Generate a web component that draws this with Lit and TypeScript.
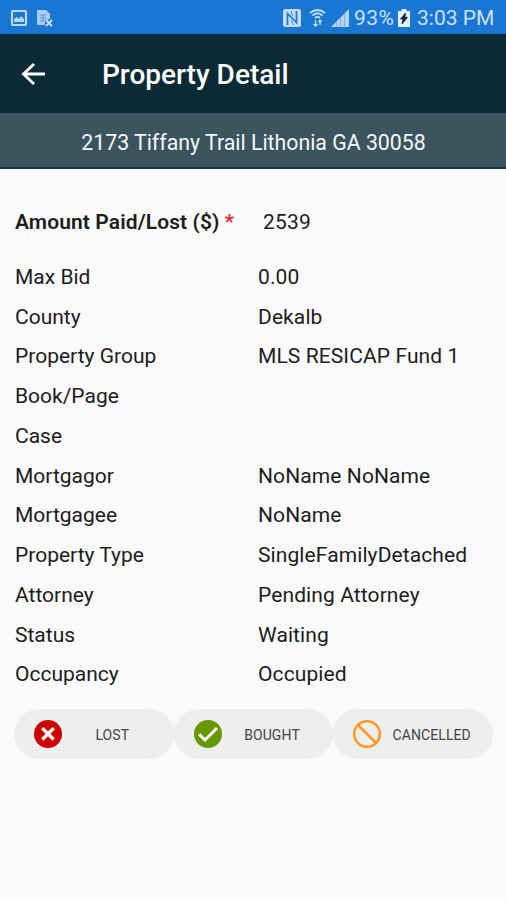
import { LitElement, html, css, svg } from "lit";
import { customElement } from "lit/decorators.js";

const rows: [string, string][] = [
  ["Max Bid", "0.00"],
  ["County", "Dekalb"],
  ["Property Group", "MLS RESICAP Fund 1"],
  ["Book/Page", ""],
  ["Case", ""],
  ["Mortgagor", "NoName NoName"],
  ["Mortgagee", "NoName"],
  ["Property Type", "SingleFamilyDetached"],
  ["Attorney", "Pending Attorney"],
  ["Status", "Waiting"],
  ["Occupancy", "Occupied"],
];

const lostIcon = svg`<circle cx="14" cy="14" r="14" fill="#cc0000"/><path d="M8.3 8.1L19.7 19.5M19.7 8.1L8.3 19.5" stroke="#fff" stroke-width="3.3"/>`;
const boughtIcon = svg`<circle cx="14" cy="14" r="14" fill="#669900"/><path d="M5.2 14.4L11 20L23 8" fill="none" stroke="#fff" stroke-width="3"/>`;
const cancelIcon = svg`<circle cx="14" cy="14" r="12.8" fill="none" stroke="#ff9822" stroke-width="2.5"/><path d="M5 5L23 23" stroke="#ff9822" stroke-width="2.5"/>`;

@customElement("app-root")
export class AppRoot extends LitElement {
  static styles = css`
    :host { display: block; height: 900px; background: #fafafa; font-family: Roboto, sans-serif; color: #1c1c1c; overflow: hidden; }
    svg { display: block; flex: none; }
    .status { height: 34px; background: #1976d2; display: flex; align-items: center; color: #c9e0fb; padding: 2px 11px 0 10px; box-sizing: border-box; }
    .status .pic { margin-right: 8px; }
    .status .right { margin-left: auto; display: flex; align-items: center; }
    .pct { font-size: 21px; margin-left: 5px; width: 44px; letter-spacing: 0.4px; }
    .time { font-size: 21px; width: 78px; margin-left: 7px; white-space: nowrap; letter-spacing: 0; }
    .wifi { margin-left: 8px; }
    .signal { margin-left: 5px; }
    .bar { height: 79px; background: #0a2a36; display: flex; align-items: center; padding-left: 21px; }
    .title { margin-left: 57px; padding-top: 2px; font-size: 28px; font-weight: 500; color: #fff; }
    .address { height: 56px; box-sizing: border-box; background: #3b545d; border-bottom: 2px solid #16394a; display: flex; align-items: center; justify-content: center; color: #f4f8fa; font-size: 21.3px; padding: 4px 0 0 1px; }
    .amount { display: grid; grid-template-columns: 248px 1fr; align-items: center; height: 69px; margin: 18px 13px 0 15px; font-size: 21px; }
    .amount .label { font-weight: 600; letter-spacing: 0.1px; }
    .star { color: #f22; font-weight: 500; }
    .amount .value { border-bottom: 1px solid #fff; line-height: 32px; padding-top: 2px; letter-spacing: 0.2px; }
    .list { display: grid; grid-template-columns: 243px 1fr; grid-auto-rows: 39.75px; align-items: center; margin: 1px 15px 0; font-size: 21px; letter-spacing: 0.1px; }
    .list .key { letter-spacing: 0; }
    .actions { display: grid; grid-template-columns: repeat(3, 1fr); margin: 15px 13px 0 14px; height: 50px; }
    .chip { background: #eee; border-radius: 25px; display: flex; align-items: center; padding: 0 19px 0 20px; }
    .chip span { flex: 1; text-align: center; font-size: 14px; padding: 2px 0 0 8px; white-space: nowrap; color: #444; letter-spacing: 0.1px; }
  `;

  render() {
    return html`
      <div class="status">
        <svg class="pic" width="18" height="18" viewBox="0 0 18 18"><rect x="2" y="2" width="14" height="14" rx="1" fill="none" stroke="#bcd8f8" stroke-width="2.2"/><path d="M4 13V10L7 8L9 10L11 7L14 10V13Z" fill="#bcd8f8"/></svg>
        <svg width="17" height="18" viewBox="0 0 17 18"><path d="M2 1H10L14 5V10L9 11V16H2Q1 16 1 15V2Q1 1 2 1Z" fill="#a9cdf5"/><path d="M4 6H10M4 9H10M4 12H8M7 5V13" stroke="#5b9be0"/><path d="M10 11L16 17M16 11L10 17" stroke="#cfe4fc" stroke-width="1.8"/></svg>
        <div class="right">
          <svg width="18" height="18" viewBox="0 0 18 18"><rect width="18" height="18" rx="2.5" fill="#c3dcf9"/><path d="M4.500 16V4.500L13.500 13.500V2" fill="none" stroke="#1976d2" stroke-width="1.700"/><path d="M8 2L9.500 7M8.500 11L10 16" stroke="#1976d2" stroke-width=".8"/></svg>
          <svg class="wifi" width="17" height="18" viewBox="0 0 17 18"><path d="M1 4Q8.500-2 16 4M3.500 6.500Q8.500 2 13.500 6.500M6 9Q8.500 6.500 11 9" fill="none" stroke="#c3dcf9" stroke-width="1.9"/><path d="M6.500 11V17M4.500 15L6.500 17L8.500 15M11 16V11M9.500 13L11 11L12.500 13" fill="none" stroke="#c3dcf9" stroke-width="1.3"/></svg>
          <svg class="signal" width="18" height="18" viewBox="0 0 18 18"><path d="M0 18L18 0V18Z" fill="#b5d3f6"/><path d="M5.500 12V18M9.500 8V18M13.500 4V18" stroke="#70a9e5" stroke-width=".8"/></svg>
          <span class="pct">93%</span>
          <svg width="12" height="18" viewBox="0 0 12 18"><path d="M3.500 0H8.500V2H12V18H0V2H3.500Z" fill="#e4effc"/><path d="M7.500 4L2.500 10H5L4 15L9.500 8.500H7Z" fill="#132635" stroke="#132635" stroke-width=".8"/></svg>
          <span class="time">3:03 PM</span>
        </div>
      </div>
      <div class="bar">
        <svg width="24" height="24" viewBox="0 0 24 24"><path d="M24 12H4M13 2L2.500 12L13 22" fill="none" stroke="#fff" stroke-width="2.900"/></svg>
        <span class="title">Property Detail</span>
      </div>
      <div class="address"><span>2173 Tiffany Trail Lithonia GA 30058</span></div>
      <div class="amount">
        <span class="label">Amount Paid/Lost ($) <span class="star">*</span></span>
        <span class="value">2539</span>
      </div>
      <div class="list">
        ${rows.map(([k, v]) => html`<span class="key">${k}</span><span>${v}</span>`)}
      </div>
      <div class="actions">
        ${[["LOST", lostIcon], ["BOUGHT", boughtIcon], ["CANCELLED", cancelIcon]].map(
          ([t, i]) => html`<div class="chip"><svg width="28" height="28" viewBox="0 0 28 28">${i}</svg><span>${t}</span></div>`
        )}
      </div>
    `;
  }
}
